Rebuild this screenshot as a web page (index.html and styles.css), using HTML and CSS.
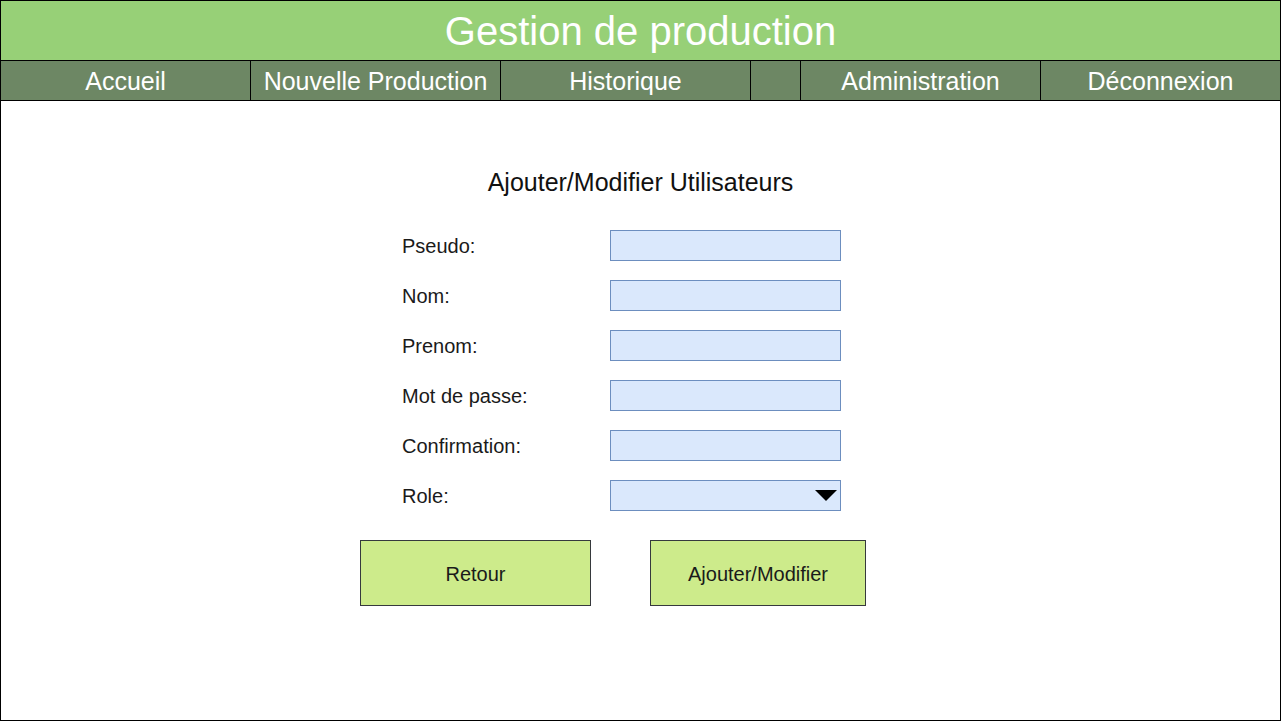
FILE: index.html
```html
<!DOCTYPE html>
<html lang="fr">
<head>
<meta charset="utf-8">
<title>Gestion de production</title>
<link rel="stylesheet" href="styles.css">
</head>
<body>
<div class="frame">
  <header class="header">Gestion de production</header>
  <nav class="nav">
    <div class="nav-item w250">Accueil</div>
    <div class="nav-item w250">Nouvelle Production</div>
    <div class="nav-item w250">Historique</div>
    <div class="nav-item w50"></div>
    <div class="nav-item w240">Administration</div>
    <div class="nav-item last">Déconnexion</div>
  </nav>
  <main class="main">
    <h1 class="title">Ajouter/Modifier Utilisateurs</h1>
    <div class="fields">
      <div class="label">Pseudo:</div><div class="input"></div>
      <div class="label">Nom:</div><div class="input"></div>
      <div class="label">Prenom:</div><div class="input"></div>
      <div class="label">Mot de passe:</div><div class="input"></div>
      <div class="label">Confirmation:</div><div class="input"></div>
      <div class="label">Role:</div><div class="input select"><span class="arrow"></span></div>
    </div>
    <div class="buttons">
      <div class="btn btn-back">Retour</div>
      <div class="btn btn-submit">Ajouter/Modifier</div>
    </div>
  </main>
</div>
</body>
</html>
```
FILE: styles.css
```css
html, body {
  margin: 0;
  padding: 0;
  background: #fff;
}
body {
  font-family: "Liberation Sans", Arial, sans-serif;
}
.frame {
  width: 1281px;
  height: 721px;
  box-sizing: border-box;
  border: 1px solid #000;
  display: flex;
  flex-direction: column;
  overflow: hidden;
}
.header {
  height: 60px;
  box-sizing: border-box;
  border-bottom: 1px solid #000;
  background: #97d077;
  color: #fff;
  font-size: 40px;
  line-height: 58px;
  padding-top: 1px;
  text-align: center;
}
.nav {
  height: 40px;
  box-sizing: border-box;
  border-bottom: 1px solid #000;
  background: #6d8764;
  display: flex;
}
.nav-item {
  box-sizing: border-box;
  border-right: 1px solid #000;
  color: #fff;
  font-size: 25px;
  line-height: 38px;
  padding-top: 1px;
  text-align: center;
  white-space: nowrap;
}
.w250 { width: 250px; }
.w50 { width: 50px; }
.w240 { width: 240px; }
.nav-item.last {
  flex: 1;
  border-right: none;
}
.main {
  flex: 1;
  display: flex;
  flex-direction: column;
  padding-top: 66px;
}
.title {
  margin: 0;
  font-weight: normal;
  font-size: 25px;
  line-height: 30px;
  text-align: center;
  color: #111;
}
.fields {
  margin-top: 33px;
  margin-left: 401px;
  display: grid;
  grid-template-columns: 208px 231px;
  grid-auto-rows: 31px;
  row-gap: 19px;
}
.label {
  font-size: 20px;
  line-height: 30px;
  padding-top: 1px;
  color: #1a1a1a;
}
.input {
  box-sizing: border-box;
  background: #dae8fc;
  border: 1px solid #6c8ebf;
  height: 31px;
}
.select {
  display: flex;
  justify-content: flex-end;
  align-items: center;
  padding-right: 3px;
}
.arrow {
  width: 0;
  height: 0;
  border-left: 11px solid transparent;
  border-right: 11px solid transparent;
  border-top: 11px solid #000;
}
.buttons {
  margin-top: 29px;
  margin-left: 359px;
  display: flex;
  gap: 59px;
}
.btn {
  box-sizing: border-box;
  height: 66px;
  padding-top: 2px;
  background: #cdeb8b;
  border: 1px solid #36393d;
  font-size: 20px;
  color: #1a1a1a;
  display: flex;
  align-items: center;
  justify-content: center;
}
.btn-back { width: 231px; }
.btn-submit { width: 216px; }
```
